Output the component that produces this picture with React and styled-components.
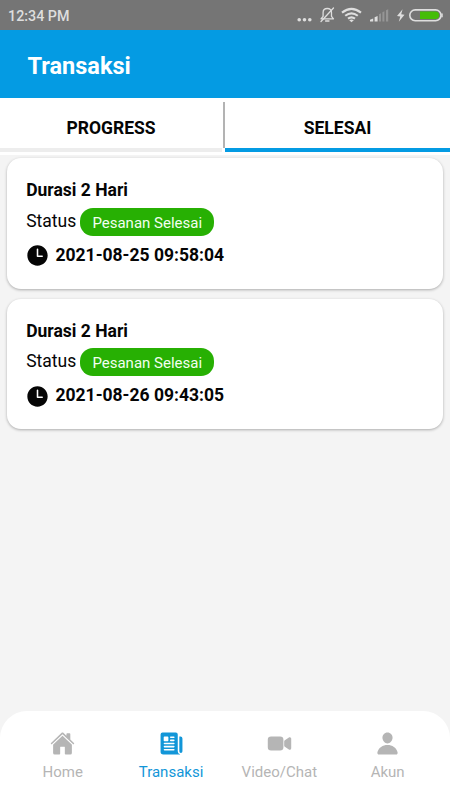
import React from "react";
import styled, { createGlobalStyle } from "styled-components";
import { IoHome, IoNewspaper, IoVideocam, IoPerson, IoTime } from "react-icons/io5";

const GlobalStyle = createGlobalStyle`
  * { box-sizing: border-box; }
  body { margin: 0; font-family: Roboto, sans-serif; color: #050505; }
`;

const Screen = styled.div`
  display: flex;
  flex-direction: column;
  width: 450px;
  height: 800px;
  overflow: hidden;
  background: #f4f4f4;
`;

const StatusBar = styled.div`
  display: flex;
  align-items: center;
  justify-content: space-between;
  flex: none;
  height: 30px;
  padding: 2px 7px 0 8px;
  background: #757575;
`;

const Clock = styled.span`
  font-size: 14.3px;
  font-weight: 500;
  line-height: 16px;
  color: #dedede;
`;

const StatusIcons = styled.svg`
  display: block;
  width: 147px;
  height: 20px;
`;

const Header = styled.header`
  display: flex;
  align-items: center;
  flex: none;
  height: 68px;
  padding: 4px 27.5px 0;
  background: #049be3;
`;

const Title = styled.h1`
  margin: 0;
  font-size: 23.5px;
  line-height: 30px;
  font-weight: 700;
  color: #fff;
`;

const Tabs = styled.div`
  display: grid;
  grid-template-columns: 222px 3px 225px;
  flex: none;
  height: 57px;
  background: #fff;
  border-bottom: 3px solid #fff;
`;

const Tab = styled.button`
  height: 54px;
  padding: 9px 0 0;
  border: 0;
  border-bottom: 4px solid ${(p) => (p.$active ? "#049be3" : "#ededed")};
  background: none;
  font: 700 17.5px/20px Roboto, sans-serif;
  color: #050505;
`;

const Divider = styled.div`
  height: 46px;
  margin: 4px 0 0 0.6px;
  background: #b3b3b3;
`;

const List = styled.main`
  display: flex;
  flex-direction: column;
  gap: 9.8px;
  flex: 1;
  padding: 3px 7px 0;
`;

const Card = styled.article`
  height: 130.8px;
  padding: 22.3px 19px 0 19.2px;
  border-radius: 14px;
  background: #fff;
  box-shadow: 0 1px 3px rgba(0, 0, 0, 0.3);
`;

const Duration = styled.h2`
  margin: 0;
  font-size: 17.5px;
  line-height: 20px;
  font-weight: 700;
`;

const StatusRow = styled.div`
  display: flex;
  align-items: center;
  gap: 4px;
  height: 29px;
  margin-top: 7px;
`;

const StatusLabel = styled.span`
  width: 49.8px;
  margin-top: -2px;
  font-size: 17.5px;
  line-height: 20px;
`;

const Badge = styled.span`
  width: 134.5px;
  height: 28px;
  padding-top: 1px;
  border-radius: 13px;
  background: #27b003;
  font-size: 15px;
  line-height: 28px;
  text-align: center;
  color: #f2fff0;
`;

const TimeRow = styled.div`
  display: flex;
  align-items: center;
  height: 25px;
  margin-top: 7px;
  font-size: 17.5px;
  font-weight: 700;
  line-height: 20px;

  svg { flex: none; margin: 0 5.2px 0 -0.9px; }
  span { margin-top: -2px; }
`;

const BottomNav = styled.nav`
  display: grid;
  grid-template-columns: repeat(4, 108.3px);
  flex: none;
  height: 89px;
  padding: 19.5px 8px 0 8.6px;
  border-radius: 27px 27px 0 0;
  background: #fff;
`;

const NavItem = styled.a`
  display: flex;
  flex-direction: column;
  align-items: center;
  gap: 6.5px;
  font-size: 15px;
  line-height: 20px;
  color: ${(p) => (p.$active ? "#1296d8" : "#b5b5b5")};
`;

const orders = [
  { duration: "Durasi 2 Hari", status: "Pesanan Selesai", time: "2021-08-25 09:58:04" },
  { duration: "Durasi 2 Hari", status: "Pesanan Selesai", time: "2021-08-26 09:43:05" },
];

const navItems = [
  { label: "Home", Icon: IoHome },
  { label: "Transaksi", Icon: IoNewspaper, active: true },
  { label: "Video/Chat", Icon: IoVideocam },
  { label: "Akun", Icon: IoPerson },
];

function SystemIcons() {
  return (
    <StatusIcons viewBox="296 6 147 20" fill="none">
      <g fill="#dedede">
        <circle cx="299.2" cy="19.8" r="1.8" />
        <circle cx="304.5" cy="19.8" r="1.8" />
        <circle cx="309.8" cy="19.8" r="1.8" />
      </g>
      <g stroke="#dedede" strokeWidth="1.3" strokeLinecap="round" strokeLinejoin="round">
        <path d="M321 18.8h12.500l-2-2.500v-3.800c0-2.800-1.600-4-4.200-4s-4.200 1.200-4.200 4v3.800zM325.600 21h3.400" />
        <path d="M321 21.500 333.500 8" />
      </g>
      <g stroke="#dedede" strokeWidth="2.1">
        <path d="M342 12.600q9.500-7.600 19 0M345.200 15.800q6.300-5 12.600 0M348 18.600q3.500-2.600 7 0" />
      </g>
      <path d="M349.200 20.200q2.300-1.400 4.600 0l-2.300 2.100z" fill="#dedede" />
      <path d="M370 21.500v-1.700l3.200-1.200v2.900zM374.600 21.500v-4.200l3-1.400v5.600z" fill="#dedede" />
      <path d="M379 21.500v-7.200l2-1v8.200zM382.400 21.500v-9.200l2-1v10.200zM386 21.500v-11.200l2.200-1v12.200z" fill="#959595" />
      <path d="m402.600 9.200-5.600 6.700 3.300.5-1.500 5.400 5.700-7.100-3.300-.5z" fill="#dedede" />
      <rect x="409.800" y="9.900" width="31.200" height="10.800" rx="5.400" stroke="#dedede" strokeWidth="1.6" />
      <path d="M420 11.600h15.400a3.700 3.700 0 0 1 0 7.400H420z" fill="#45bd08" />
      <path d="M442 13.500v3.800" stroke="#dedede" strokeWidth="1.500" />
    </StatusIcons>
  );
}

function OrderCard({ order }) {
  return (
    <Card>
      <Duration>{order.duration}</Duration>
      <StatusRow>
        <StatusLabel>Status</StatusLabel>
        <Badge>{order.status}</Badge>
      </StatusRow>
      <TimeRow>
        <IoTime size={25} />
        <span>{order.time}</span>
      </TimeRow>
    </Card>
  );
}

export default function App() {
  return (
    <Screen>
      <GlobalStyle />
      <StatusBar>
        <Clock>12:34 PM</Clock>
        <SystemIcons />
      </StatusBar>
      <Header>
        <Title>Transaksi</Title>
      </Header>
      <Tabs>
        <Tab>PROGRESS</Tab>
        <Divider />
        <Tab $active>SELESAI</Tab>
      </Tabs>
      <List>
        {orders.map((order) => (
          <OrderCard key={order.time} order={order} />
        ))}
      </List>
      <BottomNav>
        {navItems.map(({ label, Icon, active }) => (
          <NavItem key={label} $active={active}>
            <Icon size={25} />
            <span>{label}</span>
          </NavItem>
        ))}
      </BottomNav>
    </Screen>
  );
}
